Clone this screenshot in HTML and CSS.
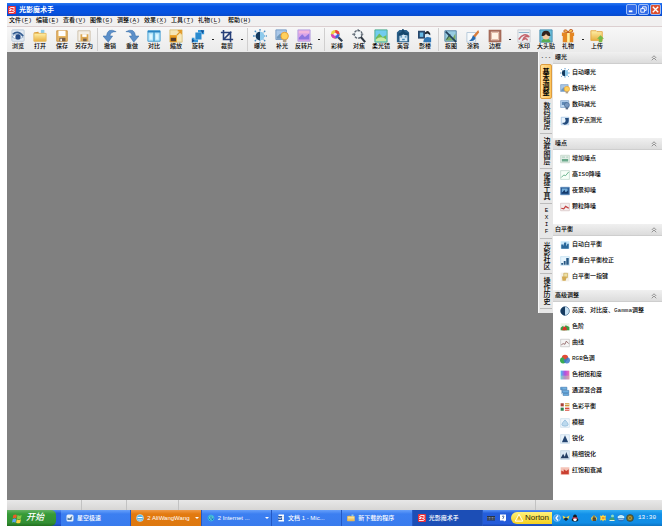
FILE: index.html
```html
<!DOCTYPE html>
<html lang="zh-CN">
<head>
  <meta charset="UTF-8">
  <meta name="viewport" content="width=device-width, initial-scale=1">
  <title>光影魔术手</title>
  <link rel="stylesheet" href="styles.css">
</head>
<body>
  <svg class="sprite" aria-hidden="true">
    <defs>
      <linearGradient id="rainbow"><stop offset="0" stop-color="#4ac0f0"/><stop offset=".5" stop-color="#b050e0"/><stop offset="1" stop-color="#f070b0"/></linearGradient>
      <linearGradient id="folder" x2="0" y2="1"><stop offset="0" stop-color="#fff0a8"/><stop offset="1" stop-color="#e8b040"/></linearGradient>
    </defs>
    <symbol id="logo" viewBox="0 0 16 16"><rect width="16" height="16" rx="2" fill="#e8323c"/><path d="M13 3H5L3 6l10 4-2 3H2M2 9h4M10 6h4" fill="none" stroke="#fff" stroke-width="1.8"/></symbol>
    <symbol id="browse" viewBox="0 0 16 16"><rect x="1" y="1" width="14" height="13" rx="1" fill="#e2eaf3" stroke="#b8c8d8"/><path d="M1 9q6-6 13 0-6 5-13 0z" fill="#fff" stroke="#8fa9c8"/><circle cx="8" cy="9" r="3" fill="#234a86"/><path d="M2 6q6-5 12 2" fill="none" stroke="#345d92" stroke-width="1.8"/></symbol>
    <symbol id="open" viewBox="0 0 16 16"><path d="M1 4l5-1 1 2h7v9H1z" fill="#d89b36"/><path d="M9 1h4v5H9z" fill="#8ecbe8"/><path d="M1 5h14v9H1z" fill="url(#folder)" stroke="#e9bd60"/></symbol>
    <symbol id="save" viewBox="0 0 16 16"><path d="M2 2h12v12H2z" fill="#e8b865" stroke="#c89040"/><path d="M4 2h8v6H4z" fill="#fff"/><path d="M5 10h7v4H5z" fill="#785f48"/><path d="M6 11h2v3H6z" fill="#eee"/></symbol>
    <symbol id="saveas" viewBox="0 0 16 16"><path d="M1 2h14v12H1z" fill="#f4eee4" stroke="#cabda5"/><path d="M4 6h9v8H4z" fill="#dda752"/><path d="M6 6h5v3H6z" fill="#fff"/><path d="M7 11h4v3H7z" fill="#77604c"/></symbol>
    <symbol id="undo" viewBox="0 0 16 16"><path d="M15 3Q5-2 4 8H0l6 7 5-7H8q0-5 7-5z" fill="#5b8fc9" stroke="#3c71ab" stroke-width=".6"/></symbol>
    <symbol id="redo" viewBox="0 0 16 16"><path d="M1 3q10-5 11 5h4l-6 7-5-7h3q0-5-7-5z" fill="#5b8fc9" stroke="#3c71ab" stroke-width=".6"/></symbol>
    <symbol id="compare" viewBox="0 0 16 16"><path d="M1 2h14v12H1z" fill="#b5e5fa" stroke="#3b98ce"/><path d="M1 2h14v2H1z" fill="#2884c4"/><path d="M8 3v11" stroke="#3794c9" stroke-width="1.5"/><path d="M3 6h3v6H3zM10 6h3v6h-3z" fill="#e0f7ff"/></symbol>
    <symbol id="resize" viewBox="0 0 16 16"><path d="M1 1h14v14H1z" fill="#f6e7b8" stroke="#d8c07c"/><path d="M1 7h8v8H1z" fill="#ec9e22"/><path d="M2 10h6v4H2z" fill="#573d2c"/><path d="M9 7l5-5M10 2h4v4" fill="none" stroke="#e29928" stroke-width="1.5"/></symbol>
    <symbol id="rotate" viewBox="0 0 16 16"><path d="M5 4h7v8H5z" fill="#298bd0"/><path d="M8 4V1h7v5h-3V4zM8 12v3H1v-5h3v2z" fill="#3598da"/><path d="M11 1l4 1-2 3zM1 11l3 2-3 3z" fill="#174f91"/></symbol>
    <symbol id="crop" viewBox="0 0 16 16"><path d="M4 1v11h11M1 4h11v11M4 12l9-9" fill="none" stroke="#263f79" stroke-width="1.8"/></symbol>
    <symbol id="sun" viewBox="0 0 16 16"><path d="M8 0v16M0 8h16M2 2l12 12M14 2L2 14" stroke="#4a8fc4" stroke-width="1.5" stroke-dasharray="2 1"/><circle cx="8" cy="8" r="5" fill="#dff3fd"/><path d="M8 3a5 5 0 000 10z" fill="#14395e"/><path d="M8 3a5 5 0 010 10z" fill="#8ecaec"/></symbol>
    <symbol id="fill" viewBox="0 0 16 16"><path d="M1 1h12v11H1z" fill="#a9c7e8" stroke="#7197c1"/><path d="M2 9l4-4 3 3 4-2v5H2z" fill="#6f98bc"/><circle cx="11" cy="8" r="4.3" fill="#ffd15d" stroke="#e89b2d"/><path d="M9 12h4v3H9z" fill="#b2a087"/></symbol>
    <symbol id="dim" viewBox="0 0 16 16"><path d="M1 1h13v11H1z" fill="#bcd6f0" stroke="#7197c1"/><path d="M3 3h9v5H3z" fill="#618bb8"/><circle cx="11" cy="8" r="4" fill="#7898c0" stroke="#42678f"/><path d="M9 12h4v3H9z" fill="#5b6c87"/></symbol>
    <symbol id="reversal" viewBox="0 0 16 16"><path d="M1 1h14v13H1z" fill="#d9a4ea" stroke="#b5a4df"/><path d="M2 10l4-4 3 3 5-4v7H2z" fill="#8e75df"/><path d="M2 2h12v3H2z" fill="#f4b7dd"/></symbol>
    <symbol id="wand" viewBox="0 0 16 16"><path d="M7 7l7 7" stroke="#314257" stroke-width="2.5"/><circle cx="6" cy="6" r="5" fill="#ecd642"/><path d="M6 6V1a5 5 0 015 5z" fill="#e63f40"/><path d="M6 6h5a5 5 0 01-5 5z" fill="#3a62df"/><path d="M6 6v5a5 5 0 01-5-5z" fill="#d944b8"/><circle cx="6" cy="6" r="1.8" fill="#f4eaff"/></symbol>
    <symbol id="focus" viewBox="0 0 16 16"><circle cx="7" cy="6" r="4.5" fill="#f2f6f8" stroke="#59636e" stroke-width="1.5" stroke-dasharray="3 1"/><path d="M10 9l5 6" stroke="#303944" stroke-width="2.5"/><path d="M0 6h4M7 0v3M10 6h3" stroke="#59636e"/></symbol>
    <symbol id="landscape" viewBox="0 0 16 16"><path d="M1 1h14v14H1z" fill="#70ccef" stroke="#48a987"/><path d="M2 10l4-5 4 4 4-2v7H2z" fill="#70bb58"/><path d="M2 12q6-5 12 0v2H2z" fill="#c8eaa5"/></symbol>
    <symbol id="face" viewBox="0 0 16 16"><path d="M1 15V4l3-3h8l3 3v11z" fill="#285d86"/><path d="M4 6h9v8H4z" fill="#d6e9f5"/><path d="M3 6q4 1 5-3 1 3 6 3" stroke="#15476d" stroke-width="3" fill="none"/><path d="M5 9h2M10 9h2M7 12h3" stroke="#4687b4" stroke-width="1.5"/></symbol>
    <symbol id="studio" viewBox="0 0 16 16"><path d="M0 2h8v9H0z" fill="#29486c"/><path d="M2 4h4v5H2z" fill="#67b9e5"/><circle cx="11" cy="6" r="3" fill="#d8ecf8"/><path d="M8 4q3-4 6 1v2l-3-2-3 1z" fill="#202831"/><path d="M6 15q1-8 9-5v5z" fill="#2f76b4"/></symbol>
    <symbol id="cutout" viewBox="0 0 16 16"><path d="M1 2h13v12H1z" fill="#98cce1" stroke="#4f7ea0"/><path d="M2 12l4-6 3 6 4-7v8H2z" fill="#78a862"/><path d="M2 3l12 12" stroke="#25435f" stroke-width="2"/><path d="M3 12l4-6" stroke="#25435f"/></symbol>
    <symbol id="doodle" viewBox="0 0 16 16"><path d="M1 4h10v11H1z" fill="#f6f9fb" stroke="#b1c6d9"/><path d="M14 1l-6 7 2 2 5-6z" fill="#da7c3a"/><path d="M8 7l3 3q-1 5-8 3 3 0 5-6z" fill="#286bb0"/></symbol>
    <symbol id="frame" viewBox="0 0 16 16"><path d="M2 2h12v12H2z" fill="#fff" stroke="#a66b59" stroke-width="2.5"/><path d="M4 4h8v8H4z" fill="#fff4e6" stroke="#dfb29d"/></symbol>
    <symbol id="stamp" viewBox="0 0 16 16"><path d="M1 1h14v14H1z" fill="#eef1f3" stroke="#c9cdd1"/><path d="M2 4h12" stroke="#7fabc6"/><path d="M2 12Q8 3 14 9q-5-2-7 3 4-2 5 1" stroke="#c4646d" stroke-width="1.8" fill="none"/></symbol>
    <symbol id="sticker" viewBox="0 0 16 16"><path d="M1 1h14v14H1z" fill="#69bdd9" stroke="#438bae"/><path d="M3 13q5-5 10 0v2H3z" fill="#59ad55"/><circle cx="8" cy="8" r="4" fill="#f4c99e"/><path d="M3 8q0-6 5-6t5 6q-4 0-5-3-1 3-5 3z" fill="#32231d"/></symbol>
    <symbol id="gift" viewBox="0 0 16 16"><path d="M2 7h12v8H2zM1 4h14v4H1z" fill="#e58722"/><path d="M7 4h3v11H7z" fill="#fff0a2"/><path d="M8 4Q1 4 4 1q3-1 4 3 2-5 5-3 2 3-5 3z" fill="#fac657" stroke="#bd551d"/></symbol>
    <symbol id="upload" viewBox="0 0 16 16"><path d="M1 2h6l1 1h6v10H1z" fill="url(#folder)" stroke="#e3a641"/><path d="M10 15v-4H8l4-4 4 4h-2v4z" fill="#78ba47"/></symbol>
    <symbol id="spot" viewBox="0 0 16 16"><path d="M2 2h12v12H2z" fill="#e8f3fd" stroke="#8eb5da"/><path d="M8 3h6v5q-1 6-7 6l-4-3q6 0 6-4z" fill="#244c7d"/></symbol>
    <symbol id="noise" viewBox="0 0 16 16"><path d="M1 2h14v12H1z" fill="#e2eee7" stroke="#b8cdbf"/><path d="M3 8h10v4H3z" fill="#6ba98b"/><path d="M3 5h5M10 5h3" stroke="#91b5a2"/></symbol>
    <symbol id="iso" viewBox="0 0 16 16"><path d="M1 1h14v14H1z" fill="#f7fff8" stroke="#b4d0c2"/><path d="M2 12l4-4 3 1 5-6" fill="none" stroke="#58a980" stroke-width="1.4"/></symbol>
    <symbol id="night" viewBox="0 0 16 16"><path d="M1 2h14v12H1z" fill="#295a94" stroke="#5689bc"/><path d="M3 4h9v6H3z" fill="#74add9"/><path d="M3 11l4-5 2 4 4-3v5H3z" fill="#153a6b"/></symbol>
    <symbol id="grain" viewBox="0 0 16 16"><path d="M1 2h14v12H1z" fill="#f3eeee" stroke="#d2bbbb"/><path d="M2 10l4 1 3-4 5 3" fill="none" stroke="#c44141" stroke-width="2"/></symbol>
    <symbol id="balance" viewBox="0 0 16 16"><path d="M1 2h14v12H1z" fill="#c9e8fa"/><path d="M2 14V7h3v3l2-6h3v6l2-4h2v8z" fill="#28679a"/></symbol>
    <symbol id="bars" viewBox="0 0 16 16"><path d="M1 1h14v14H1z" fill="#e7f5fd" stroke="#b7daee"/><path d="M2 14v-3h3v3zM6 14V8h3v6zM10 14V3h4v11z" fill="#285985"/></symbol>
    <symbol id="key" viewBox="0 0 16 16"><path d="M1 1h14v14H1z" fill="#f5f1e9"/><path d="M6 2h6v7H6z" fill="#eee0a4" stroke="#c5a54d"/><path d="M3 7h8l-2 7H4z" fill="#d2aa53"/></symbol>
    <symbol id="contrast" viewBox="0 0 16 16"><circle cx="8" cy="8" r="7" fill="#c8e2f4" stroke="#315c82"/><path d="M8 1a7 7 0 000 14z" fill="#173b60"/></symbol>
    <symbol id="levels" viewBox="0 0 16 16"><path d="M1 2h14v12H1z" fill="#eef2e7"/><path d="M1 13V9l4-3 3 7z" fill="#3a9d43"/><path d="M5 13l4-8 6 3v5z" fill="#3a9d43"/><path d="M3 13l3-6 4 1 1 5z" fill="#d93429"/></symbol>
    <symbol id="curve" viewBox="0 0 16 16"><path d="M1 2h14v12H1z" fill="#f4f4f4" stroke="#bbb"/><path d="M2 11l3-2 3 1 2-5 4 4" fill="none" stroke="#895a5a" stroke-width="1.3"/></symbol>
    <symbol id="rgb" viewBox="0 0 16 16"><circle cx="8" cy="6" r="5" fill="#e44b35"/><circle cx="5" cy="10" r="5" fill="#3aac51"/><circle cx="11" cy="10" r="5" fill="#3b79ca" opacity=".85"/><path d="M4 4q4-4 8 1L8 9z" fill="#e44b35"/></symbol>
    <symbol id="hue" viewBox="0 0 16 16"><path d="M1 1h14v14H1z" fill="url(#rainbow)"/><path d="M1 9h14v6H1z" fill="#bff29c" opacity=".4"/></symbol>
    <symbol id="mixer" viewBox="0 0 16 16"><path d="M1 2h10v4H1zM4 7h10v4H4zM5 12h9v3H5z" fill="#6fafe0" stroke="#3c76af"/><path d="M3 3v10" stroke="#447bb6"/></symbol>
    <symbol id="colors" viewBox="0 0 16 16"><path d="M1 2h5v5H1z" fill="#a94338"/><path d="M8 2h7v5H8z" fill="#cc9836"/><path d="M1 9h5v5H1z" fill="#31814e"/><path d="M8 9h7v5H8z" fill="#d84c3d"/><path d="M8 4h7M8 12h7" stroke="#fff"/></symbol>
    <symbol id="blur" viewBox="0 0 16 16"><path d="M1 1h14v14H1z" fill="#eef6fc" stroke="#c6dae9"/><path d="M8 3q10 10 0 10T8 3z" fill="#bbd9ee" stroke="#80afd0"/></symbol>
    <symbol id="sharp" viewBox="0 0 16 16"><path d="M1 1h14v14H1z" fill="#e9f3fb" stroke="#c1d7e9"/><path d="M8 2l5 11H3z" fill="#234471"/></symbol>
    <symbol id="finesharp" viewBox="0 0 16 16"><path d="M1 1h14v14H1z" fill="#dceaf5" stroke="#b4cbdd"/><path d="M5 6l4 7H1zM10 3l4 10H7z" fill="#243f64"/></symbol>
    <symbol id="redfade" viewBox="0 0 16 16"><path d="M1 2h14v12H1z" fill="#f4c3b7"/><path d="M2 13V7l4 2V5l4 3 4-3v8z" fill="#ca4031"/></symbol>
    <symbol id="up" viewBox="0 0 8 8"><path d="M1 4l3-3 3 3M1 7l3-3 3 3" fill="none" stroke="#777"/></symbol>
    <symbol id="flag" viewBox="0 0 16 16"><path d="M2 3q3-2 5 0L6 8Q4 6 1 8z" fill="#ef5a2b"/><path d="M8 3q3 2 6 0l-1 5q-3 2-6 0z" fill="#89cb48"/><path d="M1 9q3-2 5 0l-1 5q-3-2-5 0z" fill="#5aa8f2"/><path d="M7 9q3 2 6 0l-1 5q-3 2-6 0z" fill="#fbd340"/></symbol>
    <symbol id="star" viewBox="0 0 16 16"><rect x="1" y="1" width="14" height="14" rx="3" fill="#e9f2fa"/><path d="M3 12V7l4 2 6-6-2 9z" fill="#527ca2"/></symbol>
    <symbol id="chat" viewBox="0 0 16 16"><circle cx="8" cy="8" r="7" fill="#58b6ec" stroke="#e5f6ff"/><path d="M3 7h10M5 11q3 2 6 0" stroke="#fff" stroke-width="2"/></symbol>
    <symbol id="globe" viewBox="0 0 16 16"><circle cx="8" cy="8" r="6" fill="#1570bd" stroke="#35b5e8" stroke-width="2"/><path d="M5 8h7q0-4-4-4t-3 4 5 4" fill="none" stroke="#7ff0d4" stroke-width="1.5"/></symbol>
    <symbol id="doc" viewBox="0 0 16 16"><path d="M3 1h11v14H3z" fill="#fff"/><path d="M2 4h8v8H2z" fill="#2e5eaa"/><path d="M3 6l1 4 2-3 1 3 2-4" stroke="#fff" fill="none"/><path d="M11 5h2M11 8h2M11 11h2" stroke="#7892b0"/></symbol>
    <symbol id="keyboard" viewBox="0 0 16 16"><path d="M0 4h16v9H0z" fill="#283447"/><path d="M1 7h14M1 10h14" stroke="#d8e1ef" stroke-dasharray="2 1"/></symbol>
    <symbol id="help" viewBox="0 0 16 16"><path d="M2 1h12v12l-4 2-1-2H2z" fill="#fff"/><path d="M6 5q4-3 4 1L8 8v2" stroke="#234b92" stroke-width="1.5" fill="none"/></symbol>
    <symbol id="warning" viewBox="0 0 16 16"><path d="M8 2l6 11H2z" fill="#ffd23c" stroke="#fff" stroke-width="1.5"/><path d="M8 6v4" stroke="#b27b05"/></symbol>
    <symbol id="back" viewBox="0 0 16 16"><circle cx="8" cy="8" r="7" fill="#3f9df0" stroke="#a9dcff"/><path d="M10 3L6 8l4 5" fill="none" stroke="#fff" stroke-width="2.5"/></symbol>
    <symbol id="butterfly" viewBox="0 0 16 16"><path d="M8 7L1 3l2 7zM8 7l7-4-2 7z" fill="#f0d649"/><path d="M3 10l5-3 5 3-5 4z" fill="#19282e"/></symbol>
    <symbol id="penguin" viewBox="0 0 16 16"><path d="M4 7q0-6 4-6t4 6l3 5q-3 4-7 3-4 1-7-3z" fill="#15191e"/><circle cx="8" cy="11" r="3.5" fill="#fff"/><path d="M3 8h10" stroke="#e04158" stroke-width="2.5"/></symbol>
    <symbol id="shield" viewBox="0 0 16 16"><path d="M2 8l6-6 6 6-2 6H4z" fill="#ffd246"/><path d="M5 7h7v7H5z" fill="#604d29"/><path d="M8 3v6" stroke="#283b48" stroke-width="2"/></symbol>
    <symbol id="spark" viewBox="0 0 16 16"><path d="M2 3l4 1 2-3 2 3 4-1-1 5 1 5-4-1-2 3-2-3-4 1 1-5z" fill="#ffd540"/><path d="M6 6h5v4H6z" fill="#f09b24"/></symbol>
    <symbol id="buddy" viewBox="0 0 16 16"><circle cx="9" cy="4" r="3" fill="#8edcc2"/><path d="M6 7h6l2 7H6l-4-3z" fill="#409d72"/><path d="M3 13h10" stroke="#e7f5df" stroke-width="2"/></symbol>
    <symbol id="volume" viewBox="0 0 16 16"><circle cx="8" cy="8" r="7" fill="#2675c4"/><path d="M2 5q6-5 12 0v3H2zM3 11h10" fill="#aef0ff" stroke="#fff"/></symbol>
    <symbol id="disc" viewBox="0 0 16 16"><circle cx="8" cy="8" r="7" fill="#6d6530" stroke="#273c31"/><circle cx="8" cy="8" r="4" fill="#bb9e35"/><circle cx="8" cy="8" r="1.5" fill="#39331c"/></symbol>
  </svg>

  <div class="window">
    <header class="titlebar">
      <svg class="icon-sm"><use href="#logo"/></svg>
      <h1>光影魔术手</h1>
      <div class="controls">
        <button aria-label="最小化"><svg viewBox="0 0 10 10"><path d="M2 7h4" stroke="#fff" stroke-width="2"/></svg></button>
        <button aria-label="还原"><svg viewBox="0 0 10 10"><path d="M4 4V2h4v4H6M2 4h4v4H2z" fill="none" stroke="#fff"/></svg></button>
        <button class="close" aria-label="关闭"><svg viewBox="0 0 10 10"><path d="M2 2l6 6M8 2L2 8" stroke="#fff" stroke-width="1.5"/></svg></button>
      </div>
    </header>

    <nav class="menu">
      <button>文件(<u>F</u>)</button>
      <button>编辑(<u>E</u>)</button>
      <button>查看(<u>V</u>)</button>
      <button>图像(<u>G</u>)</button>
      <button>调整(<u>A</u>)</button>
      <button>效果(<u>X</u>)</button>
      <button>工具(<u>T</u>)</button>
      <button class="wide">礼物(<u>L</u>)</button>
      <button>帮助(<u>H</u>)</button>
    </nav>

    <div class="toolbar">
      <button class="tool"><svg><use href="#browse"/></svg>浏览</button>
      <button class="tool"><svg><use href="#open"/></svg>打开</button>
      <button class="tool"><svg><use href="#save"/></svg>保存</button>
      <button class="tool"><svg><use href="#saveas"/></svg>另存为</button>
      <span class="sep"></span>
      <button class="tool"><svg><use href="#undo"/></svg>撤销</button>
      <button class="tool"><svg><use href="#redo"/></svg>重做</button>
      <button class="tool"><svg><use href="#compare"/></svg>对比</button>
      <button class="tool"><svg><use href="#resize"/></svg>缩放</button>
      <button class="tool"><svg><use href="#rotate"/></svg>旋转</button>
      <button class="more" aria-label="旋转选项"></button>
      <button class="tool"><svg><use href="#crop"/></svg>裁剪</button>
      <button class="more" aria-label="裁剪选项"></button>
      <span class="sep"></span>
      <button class="tool"><svg><use href="#sun"/></svg>曝光</button>
      <button class="tool"><svg><use href="#fill"/></svg>补光</button>
      <button class="tool"><svg><use href="#reversal"/></svg>反转片</button>
      <button class="more" aria-label="反转片选项"></button>
      <span class="sep"></span>
      <button class="tool"><svg><use href="#wand"/></svg>彩棒</button>
      <button class="tool"><svg><use href="#focus"/></svg>对焦</button>
      <button class="tool"><svg><use href="#landscape"/></svg>柔光镜</button>
      <button class="tool"><svg><use href="#face"/></svg>美容</button>
      <button class="tool"><svg><use href="#studio"/></svg>影楼</button>
      <span class="sep"></span>
      <button class="tool"><svg><use href="#cutout"/></svg>抠图</button>
      <button class="tool"><svg><use href="#doodle"/></svg>涂鸦</button>
      <button class="tool"><svg><use href="#frame"/></svg>边框</button>
      <button class="more" aria-label="边框选项"></button>
      <button class="tool"><svg><use href="#stamp"/></svg>水印</button>
      <button class="tool"><svg><use href="#sticker"/></svg>大头贴</button>
      <button class="tool"><svg><use href="#gift"/></svg>礼物</button>
      <button class="more" aria-label="礼物选项"></button>
      <button class="tool"><svg><use href="#upload"/></svg>上传</button>
    </div>

    <div class="workspace">
      <main class="canvas"></main>
      <nav class="tabs">
        <button class="grip">···</button>
        <button class="tab active">基本调整</button>
        <button class="tab">数码暗房</button>
        <button class="tab">边框图层</button>
        <button class="tab">便捷工具</button>
        <button class="tab latin">EXIF</button>
        <button class="tab">光影社区</button>
        <button class="tab">操作历史</button>
      </nav>
      <aside class="panel">
        <section>
          <h2>曝光<svg><use href="#up"/></svg></h2>
          <button class="item"><svg><use href="#sun"/></svg>自动曝光</button>
          <button class="item"><svg><use href="#fill"/></svg>数码补光</button>
          <button class="item"><svg><use href="#dim"/></svg>数码减光</button>
          <button class="item"><svg><use href="#spot"/></svg>数字点测光</button>
        </section>
        <section>
          <h2>噪点<svg><use href="#up"/></svg></h2>
          <button class="item"><svg><use href="#noise"/></svg>增加噪点</button>
          <button class="item"><svg><use href="#iso"/></svg>高ISO降噪</button>
          <button class="item"><svg><use href="#night"/></svg>夜景抑噪</button>
          <button class="item"><svg><use href="#grain"/></svg>颗粒降噪</button>
        </section>
        <section class="compact">
          <h2>白平衡<svg><use href="#up"/></svg></h2>
          <button class="item"><svg><use href="#balance"/></svg>自动白平衡</button>
          <button class="item"><svg><use href="#bars"/></svg>严重白平衡校正</button>
          <button class="item"><svg><use href="#key"/></svg>白平衡一指键</button>
        </section>
        <section>
          <h2>高级调整<svg><use href="#up"/></svg></h2>
          <button class="item"><svg><use href="#contrast"/></svg>亮度、对比度、Gamma调整</button>
          <button class="item"><svg><use href="#levels"/></svg>色阶</button>
          <button class="item"><svg><use href="#curve"/></svg>曲线</button>
          <button class="item"><svg><use href="#rgb"/></svg>RGB色调</button>
          <button class="item"><svg><use href="#hue"/></svg>色相饱和度</button>
          <button class="item"><svg><use href="#mixer"/></svg>通道混合器</button>
          <button class="item"><svg><use href="#colors"/></svg>色彩平衡</button>
          <button class="item"><svg><use href="#blur"/></svg>模糊</button>
          <button class="item"><svg><use href="#sharp"/></svg>锐化</button>
          <button class="item"><svg><use href="#finesharp"/></svg>精细锐化</button>
          <button class="item"><svg><use href="#redfade"/></svg>红饱和衰减</button>
        </section>
      </aside>
    </div>

    <div class="statusbar"><span></span><span></span><span></span><span class="rest"></span><span class="last"></span></div>

    <footer class="taskbar">
      <button class="start"><svg><use href="#flag"/></svg>开始</button>
      <div class="tasks">
        <button class="task"><svg><use href="#star"/></svg><span>星空极速</span></button>
        <button class="task alert"><svg><use href="#chat"/></svg><span>2 AliWangWang</span><i></i></button>
        <button class="task"><svg><use href="#globe"/></svg><span>2 Internet ...</span><i></i></button>
        <button class="task"><svg><use href="#doc"/></svg><span>文档 1 - Mic...</span></button>
        <button class="task"><svg><use href="#open"/></svg><span>新下载的程序</span></button>
        <button class="task current"><svg><use href="#logo"/></svg><span>光影魔术手</span></button>
      </div>
      <div class="lang">
        <svg><use href="#keyboard"/></svg>
        <svg><use href="#help"/></svg>
      </div>
      <button class="norton"><svg><use href="#warning"/></svg>Norton</button>
      <div class="tray">
        <svg><use href="#back"/></svg>
        <svg><use href="#butterfly"/></svg>
        <svg class="apart"><use href="#penguin"/></svg>
        <svg><use href="#shield"/></svg>
        <svg><use href="#spark"/></svg>
        <svg><use href="#buddy"/></svg>
        <svg><use href="#volume"/></svg>
        <svg><use href="#disc"/></svg>
        <time>13:30</time>
      </div>
    </footer>
  </div>
</body>
</html>
```
FILE: styles.css
```css
* {
  box-sizing: border-box;
}

body {
  margin: 0;
  padding: 3px 8px 2px 7px;
  height: 100vh;
  background: #fff;
  color: #000;
  font-family: "Liberation Mono", "Noto Sans CJK SC", monospace;
  font-size: 6px;
  font-weight: 500;
  line-height: 8px;
}

button {
  margin: 0;
  padding: 0;
  border: 0;
  background: none;
  color: inherit;
  font: inherit;
  white-space: nowrap;
}

svg {
  display: block;
  flex: none;
}

.sprite {
  position: absolute;
  width: 0;
  height: 0;
}

.window {
  display: flex;
  flex-direction: column;
  height: 100%;
}

/* title bar */
.titlebar {
  display: flex;
  align-items: center;
  gap: 3px;
  height: 13px;
  padding: 0 1px;
  background: linear-gradient(#2b78f0, #0654e4 25%, #0552e0 75%, #0a4bcb);
  color: #fff;
}

.icon-sm {
  width: 8px;
  height: 8px;
}

h1 {
  flex: 1;
  margin: 0;
  font-size: 7px;
  font-weight: bold;
}

.controls {
  display: flex;
  gap: 1px;
}

.controls button {
  width: 11px;
  height: 11px;
  border: 1px solid #9dbdf8;
  border-radius: 2px;
  background: #316be8;
}

.controls .close {
  background: #dc5030;
}

/* menu */
.menu {
  display: flex;
  height: 11px;
  padding: 0 2px;
  background: #f1f0f0;
  border-bottom: 1px solid #dccfd0;
}

.menu button {
  width: 27px;
  text-align: left;
}

.menu .wide {
  width: 30px;
}

.menu u {
  text-decoration-thickness: 1px;
  text-decoration-color: #999;
}

/* toolbar */
.toolbar {
  display: flex;
  align-items: center;
  height: 25px;
  background: linear-gradient(#f7f7f7, #ebebeb);
}

.tool {
  display: flex;
  flex-direction: column;
  align-items: center;
  width: 22px;
}

.tool svg {
  width: 14px;
  height: 14px;
}

.more {
  width: 7px;
  height: 20px;
}

.more::before {
  content: "";
  display: block;
  width: 2px;
  height: 1px;
  margin: 0 auto;
  background: #222;
}

.sep {
  width: 1px;
  height: 23px;
  margin: 0 1px 0 2px;
  background: #d0cfcf;
}

/* work area */
.workspace {
  display: flex;
  flex: 1;
  min-height: 0;
  background: #808080;
}

.canvas {
  flex: 1;
}

.tabs {
  display: flex;
  flex-direction: column;
  align-self: flex-start;
  width: 15px;
  padding: 0 1px 4px;
  background: #e7e7e7;
  border-left: 1px solid #f8f8f8;
}

.grip {
  height: 12px;
  color: #333;
  font-weight: bold;
}

.tab {
  height: 35px;
  border-bottom: 1px solid #bcbcbc;
  line-height: 12px;
  writing-mode: vertical-rl;
  text-orientation: upright;
  font-size: 7px;
  text-align: center;
}

.tab.latin {
  font-size: 6px;
}

.tab.active {
  border: 1px solid #dd9d40;
  border-radius: 2px;
  background: linear-gradient(90deg, #ffdf97, #ffc459);
  font-weight: bold;
}

.panel {
  width: 109px;
  background: #fff;
}

.panel section {
  padding-bottom: 9px;
}

.panel .compact {
  padding-bottom: 5px;
}

h2 {
  display: flex;
  align-items: center;
  justify-content: space-between;
  height: 12px;
  margin: 0 0 1px;
  padding: 0 5px 0 2px;
  background: linear-gradient(#f0f0f0, #dcdcdc);
  border-bottom: 1px solid #cecece;
  font-size: 6px;
  font-weight: 500;
}

h2 svg {
  width: 6px;
  height: 6px;
}

.item {
  display: flex;
  align-items: center;
  gap: 2px;
  height: 16px;
  padding-left: 7px;
}

.item svg {
  width: 10px;
  height: 10px;
}

/* status bar */
.statusbar {
  display: flex;
  height: 10px;
  background: linear-gradient(#e8e8e8, #d7d6d5);
}

.statusbar span {
  width: 52px;
  border-right: 1px solid #c2c2c2;
}

.statusbar span:first-child {
  width: 75px;
}

.statusbar span:nth-child(2) {
  width: 45px;
}

.statusbar .rest {
  flex: 1;
}

.statusbar .last {
  width: 126px;
  border: 0;
}

/* taskbar */
.taskbar {
  display: flex;
  height: 16px;
  background: linear-gradient(#5792f5, #245edb 20%, #245bdb 85%, #1b48ac);
  color: #fff;
}

.start {
  display: flex;
  align-items: center;
  gap: 3px;
  width: 49px;
  margin-right: 5px;
  padding-left: 5px;
  border-radius: 0 5px 5px 0;
  background: linear-gradient(#65b365, #379b37 25%, #338f33 80%, #21701f);
  font-size: 9px;
  font-style: italic;
}

.start svg {
  width: 11px;
  height: 11px;
}

.tasks {
  display: flex;
  flex: 1;
  min-width: 0;
}

.task {
  display: flex;
  flex: 1 1 0;
  align-items: center;
  gap: 3px;
  min-width: 0;
  padding: 0 2px 0 5px;
  border-right: 1px solid #2459c4;
  background: linear-gradient(#67a0fa, #3c7ff1 25%, #397bed);
  font-family: "Liberation Sans", "Noto Sans CJK SC", sans-serif;
}

.task span {
  flex: 1;
  text-align: left;
}

.task i {
  border: 2px solid transparent;
  border-top-color: #fff;
  border-bottom: 0;
}

.task svg {
  width: 8px;
  height: 8px;
}

.task.alert {
  background: linear-gradient(#f09b48, #e37a10 25%, #dd780f);
}

.task.current {
  background: #1c4eb6;
}

.lang {
  display: flex;
  align-items: center;
  gap: 4px;
  padding: 0 4px;
}

.lang svg {
  width: 8px;
  height: 8px;
}

.norton {
  display: flex;
  align-items: center;
  gap: 1px;
  width: 41px;
  height: 12px;
  margin-top: 2px;
  padding-left: 3px;
  border-radius: 6px 0 0 6px;
  background: linear-gradient(#fff27c, #f5cf1e);
  color: #2d2a12;
  font-family: "Liberation Sans", sans-serif;
  font-size: 8px;
}

.norton svg {
  width: 10px;
  height: 10px;
}

.tray {
  display: flex;
  align-items: center;
  gap: 1px;
  width: 110px;
  padding: 0 6px 0 1px;
  background: linear-gradient(#35aff3, #1391e9 25%, #118de5 80%, #0d73c2);
}

.tray svg {
  width: 8px;
  height: 8px;
}

.tray .apart {
  margin-right: 10px;
}

.tray time {
  margin-left: auto;
}
```
